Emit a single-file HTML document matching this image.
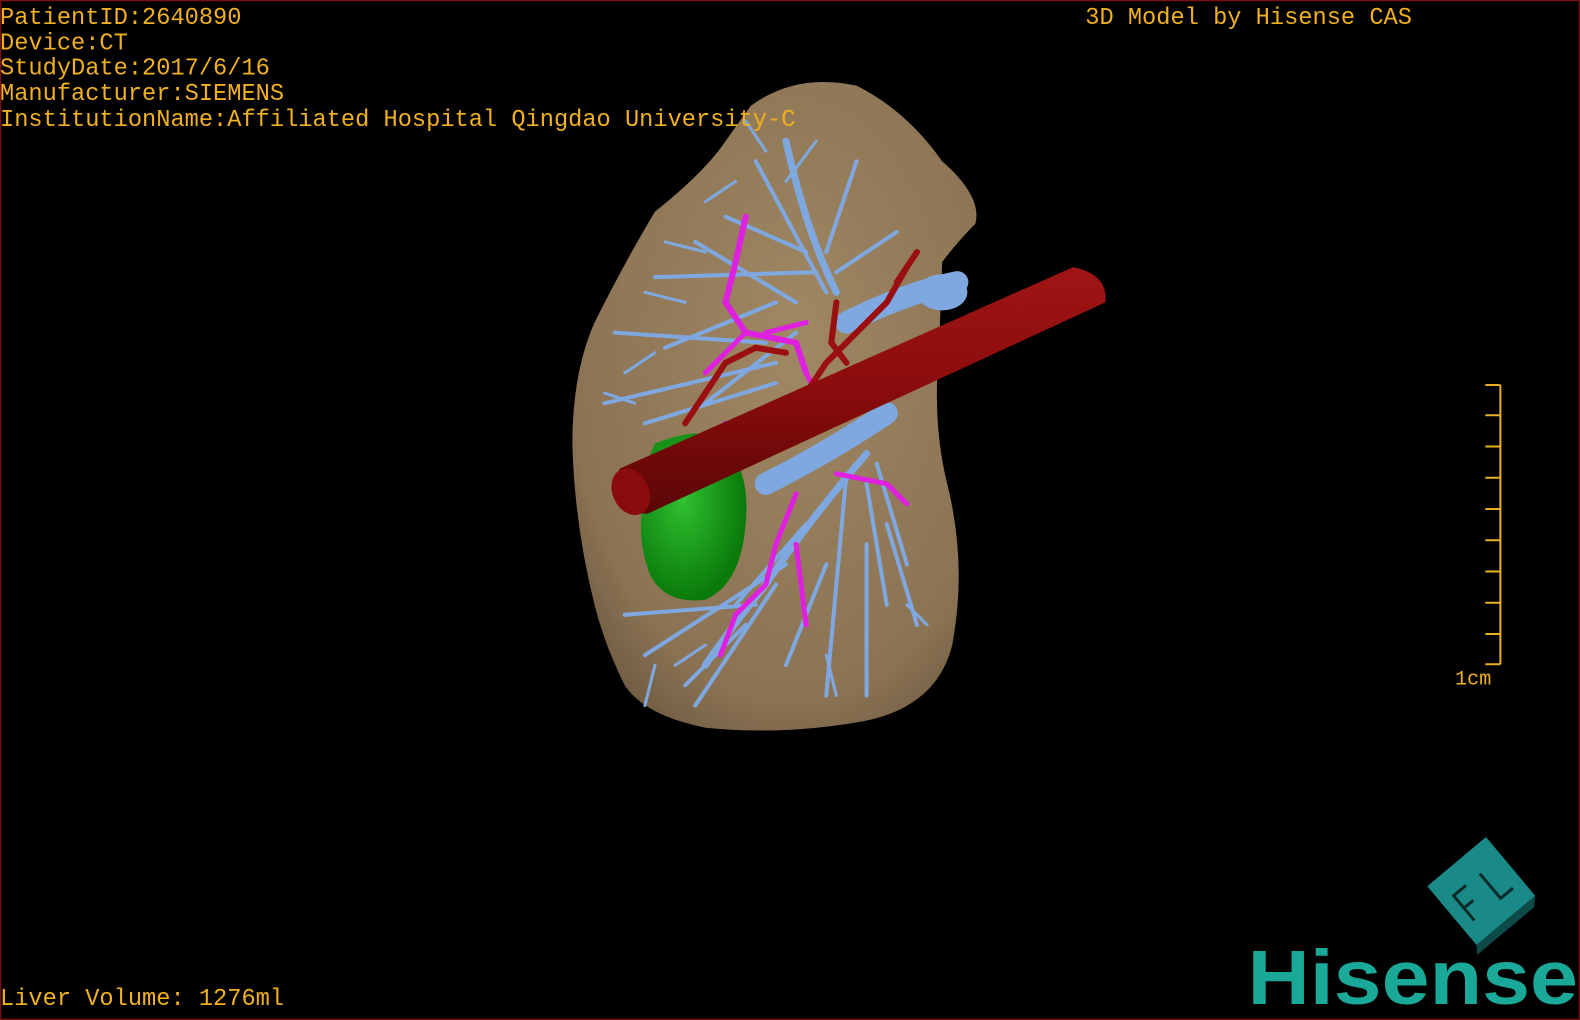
<!DOCTYPE html>
<html><head><meta charset="utf-8"><style>
html,body{margin:0;padding:0;background:#000;width:1580px;height:1020px;overflow:hidden}
svg{display:block}
</style></head><body>
<svg width="1580" height="1020" viewBox="0 0 1568 1012" preserveAspectRatio="none" xmlns="http://www.w3.org/2000/svg">
<rect x="0" y="0" width="1568" height="1012" fill="#000"/>
<rect x="0.5" y="0.5" width="1567" height="1011" fill="none" stroke="#7a1010" stroke-width="1.5"/>
<defs>
<radialGradient id="lv" cx="0.55" cy="0.4" r="0.7"><stop offset="0" stop-color="#a08864"/><stop offset="0.8" stop-color="#8a7253"/><stop offset="1" stop-color="#6e5a40"/></radialGradient>
<linearGradient id="ivc" x1="0" y1="0" x2="0" y2="1"><stop offset="0" stop-color="#a01515"/><stop offset="0.5" stop-color="#8a0c0c"/><stop offset="1" stop-color="#5a0606"/></linearGradient>
<radialGradient id="gb" cx="0.4" cy="0.4" r="0.6"><stop offset="0" stop-color="#30c030"/><stop offset="1" stop-color="#0a7a0a"/></radialGradient>
</defs>
<path d="M745 105 Q790 72 850 85 Q900 110 935 160 Q975 195 968 222 Q950 240 935 260 L932 345 Q925 420 940 480 Q960 560 945 640 Q930 700 860 715 Q780 730 700 722 Q640 710 620 680 Q600 640 590 600 Q570 520 568 440 Q568 370 590 320 Q620 260 650 210 Q700 170 720 140 Z" fill="url(#lv)"/>
<g stroke="#7fa8e0" fill="none" stroke-linecap="round">
<path d="M830 290 Q800 230 780 140" stroke-width="7"/>
<path d="M820 290 L750 160 M800 250 L720 215 M810 270 L650 275 M790 300 L690 240 M820 250 L850 160 M830 270 L890 230 M770 300 L660 345 M760 340 L610 330 M770 360 L600 400 M770 380 L640 420 M790 330 L700 400" stroke-width="4"/>
<path d="M760 150 L740 120 M780 180 L810 140 M730 180 L700 200 M700 250 L660 240 M680 300 L640 290 M650 350 L620 370 M630 400 L600 390" stroke-width="3"/>
<path d="M860 450 Q800 520 760 580 Q720 630 700 660" stroke-width="7"/>
<path d="M840 470 L820 690 M860 480 L880 600 M870 460 L900 560 M800 520 L730 600 M780 560 L640 650 M770 580 L690 700 M750 600 L620 610 M880 520 L910 620 M860 540 L860 690 M820 560 L780 660 M740 620 L680 680" stroke-width="4"/>
<path d="M650 660 L640 700 M820 650 L830 690 M900 600 L920 620 M700 640 L670 660" stroke-width="3"/>
<path d="M840 320 Q900 290 950 280" stroke-width="22"/>
<path d="M760 480 Q820 450 880 410" stroke-width="22"/>
</g>
<ellipse cx="935" cy="290" rx="25" ry="18" fill="#7fa8e0"/>
<g stroke="#e020e0" fill="none" stroke-linecap="round">
<path d="M740 215 L730 260 L720 300 L740 330 L790 340 L800 370" stroke-width="6"/>
<path d="M740 330 L700 370 M760 330 L800 320 M800 370 L810 390" stroke-width="5"/>
<path d="M790 490 L770 540 L760 580 L730 610 L715 650 M790 540 L800 620 M830 470 L880 480 L900 500 M720 420 L700 440" stroke-width="5"/>
</g>
<g stroke="#9a1010" fill="none" stroke-linecap="round">
<path d="M900 265 L880 300 L850 330 L820 360 L800 390 M830 300 L825 340 L840 360 M780 350 L750 345 L720 360 L700 390 L680 420 M810 380 L790 430 M890 280 L910 250" stroke-width="6"/>
</g>
<path d="M650 440 Q700 420 720 440 Q745 470 740 520 Q735 580 700 595 Q660 600 645 570 Q630 530 640 490 Q640 460 650 440 Z" fill="url(#gb)"/>
<path d="M615 465 L1065 265 Q1100 272 1097 300 L642 510 Q608 505 608 488 Z" fill="url(#ivc)"/>
<ellipse cx="626" cy="488" rx="18" ry="24" fill="#8a0c0c" transform="rotate(-25 626 488)"/>
<g stroke="#e8b020" stroke-width="2" fill="none">
<path d="M1489 382 L1489 659"/>
<path d="M1474 382 H1489 M1474 412 H1489 M1474 443 H1489 M1474 474 H1489 M1474 505 H1489 M1474 536 H1489 M1474 567 H1489 M1474 598 H1489 M1474 629 H1489 M1474 659 H1489"/>
</g>
<text x="1444" y="679" font-family="Liberation Mono, monospace" font-size="20" fill="#f0b020">1cm</text>
<g font-family="Liberation Mono, monospace" font-size="23.5" fill="#f0b020">
<text x="0" y="24">PatientID:2640890</text>
<text x="0" y="49">Device:CT</text>
<text x="0" y="74">StudyDate:2017/6/16</text>
<text x="0" y="99">Manufacturer:SIEMENS</text>
<text x="0" y="125">InstitutionName:Affiliated Hospital Qingdao University-C</text>
<text x="1077" y="24">3D Model by Hisense CAS</text>
<text x="0" y="997">Liver Volume: 1276ml</text>
</g>
<g transform="translate(1470 884) rotate(-40)">
<rect x="-38" y="-38" width="76" height="76" fill="#1a8a88"/>
<path d="M-38 38 L38 38 L30 46 L-44 46 Z" fill="#0d4a48"/>
<g stroke="#0a2a2a" stroke-width="3" fill="none">
<path d="M-24 18 V-14 H-8 M-24 2 H-12"/>
<path d="M10 -14 V18 H26"/>
</g>
</g>
<text x="1238" y="996" font-family="Liberation Sans, sans-serif" font-weight="bold" font-size="76" fill="#1aa898" textLength="328" lengthAdjust="spacingAndGlyphs">Hisense</text>
</svg>
</body></html>
